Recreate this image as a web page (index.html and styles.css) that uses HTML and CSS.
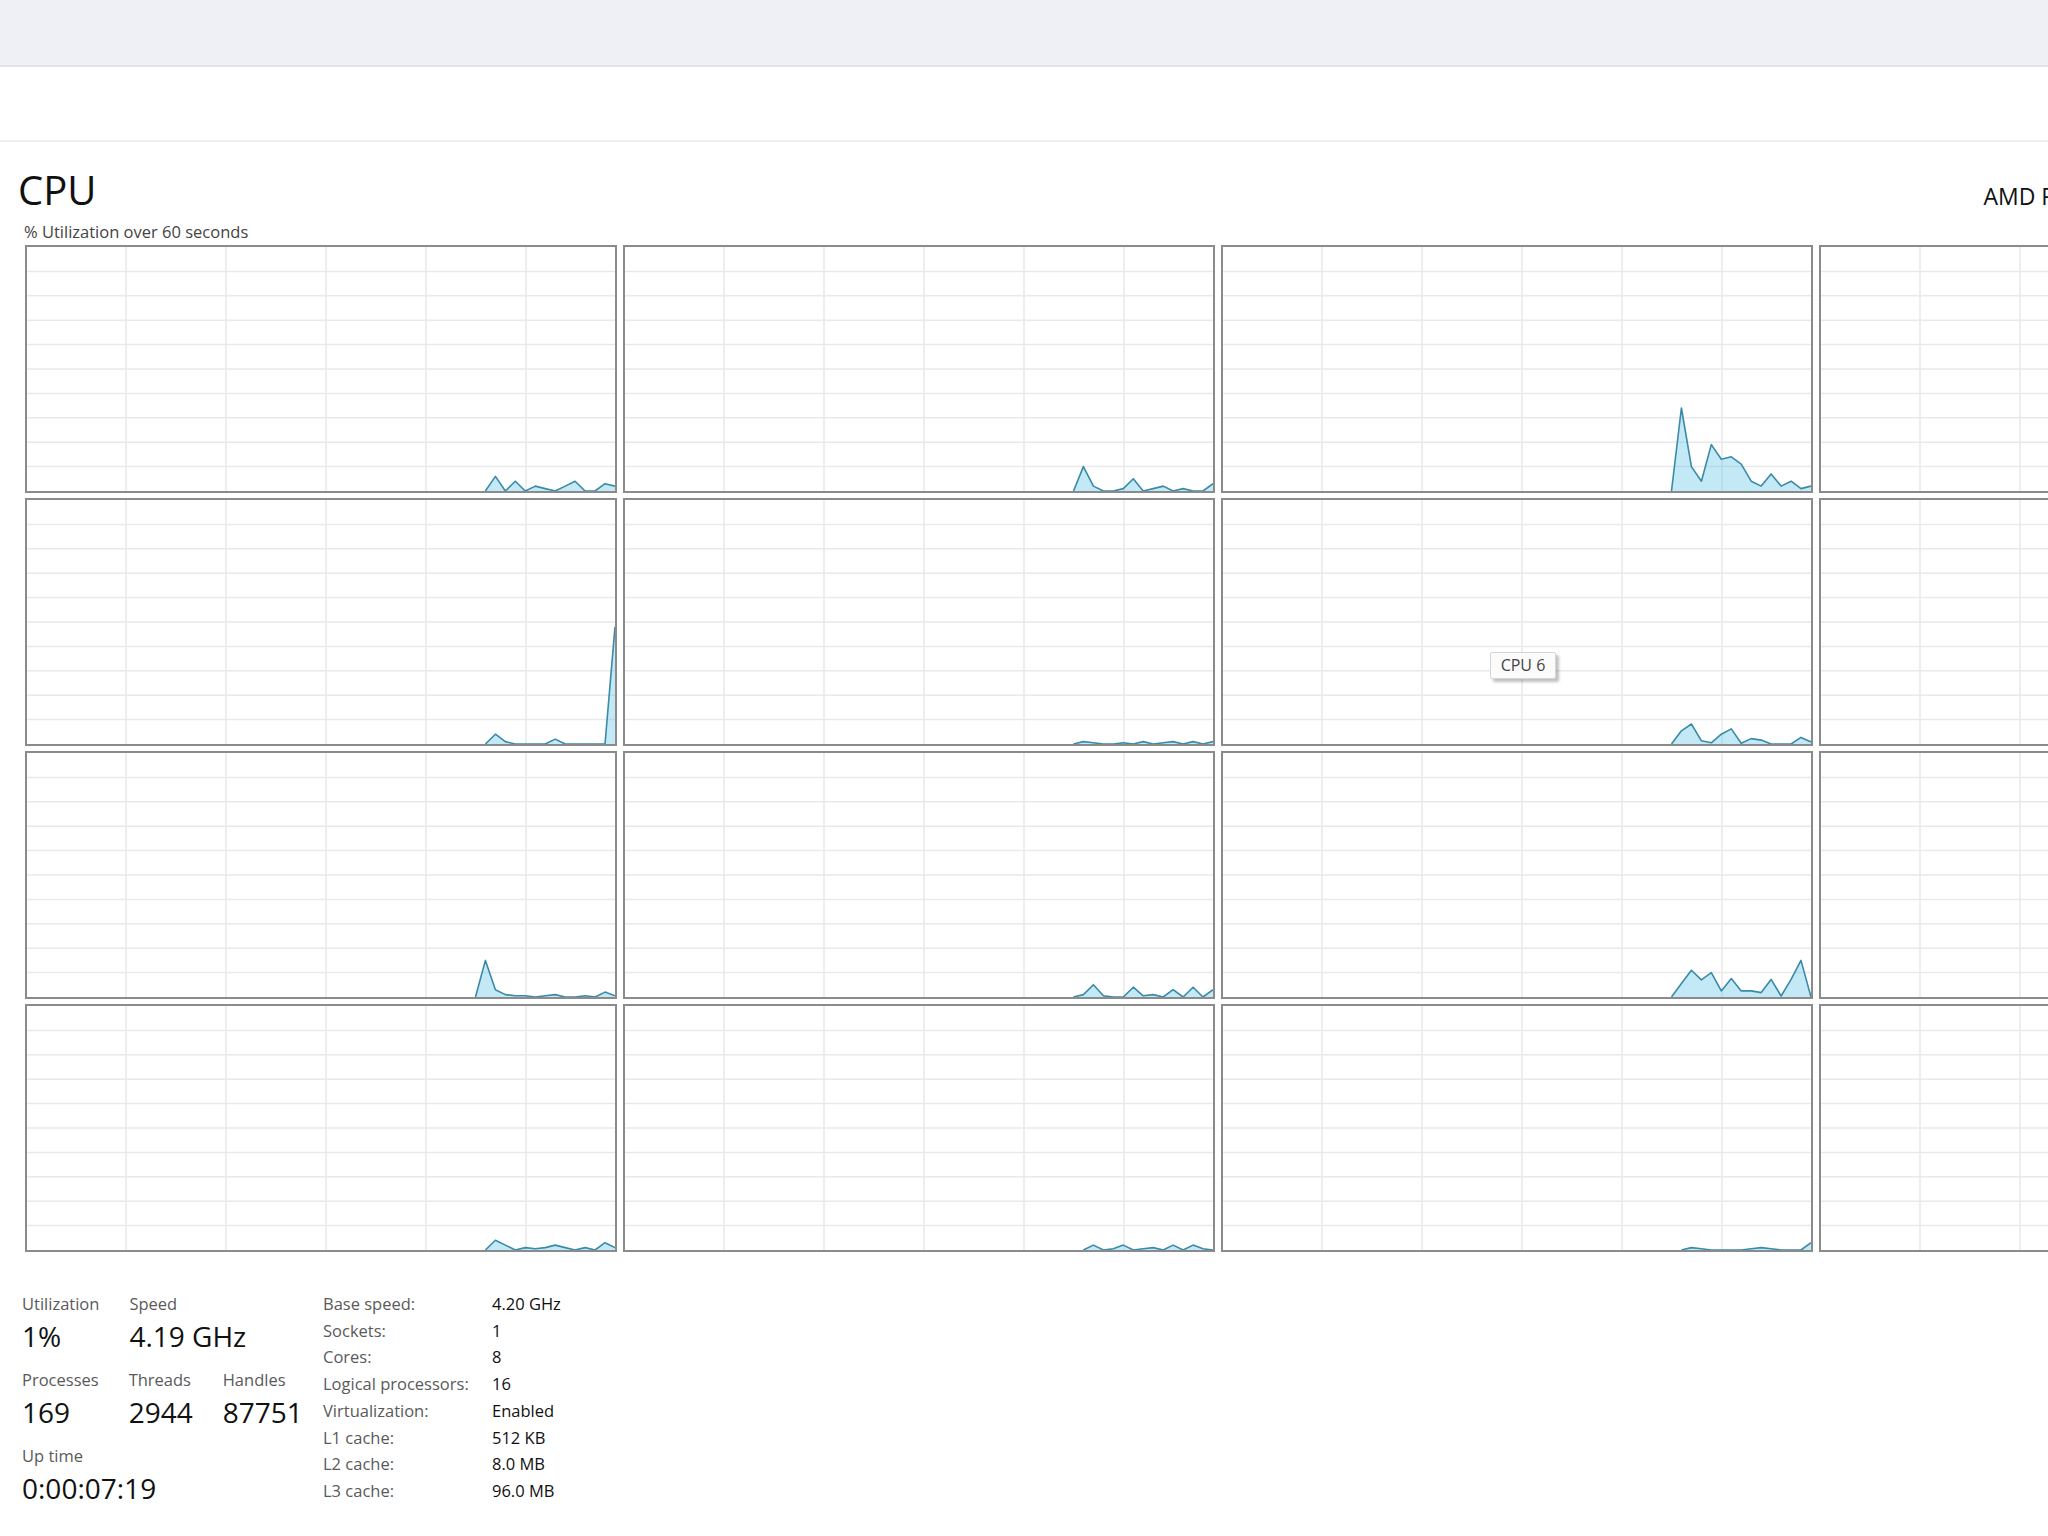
FILE: index.html
```html
<!doctype html>
<html lang="en">
  <head>
    <meta charset="UTF-8" />
    <meta name="viewport" content="width=device-width, initial-scale=1.0" />
    <title>Task Manager - Performance</title>
    <link rel="stylesheet" href="styles.css">
  </head>
  <body>
    <div class="titlebar"></div>
    <div class="toolbar"></div>

    <section class="perf">
      <div class="perf-head">
        <h1 class="perf-title">CPU</h1>
        <div class="perf-model">AMD Ryzen 7 7800X3D 8-Core Processor</div>
      </div>
      <div class="graph-caption">% Utilization over 60 seconds</div>
      <div class="core-grid" id="coreGrid"></div>

      <div class="stats">
        <div class="stats-live">
          <div class="stat-row">
            <div class="stat">
              <div class="stat-label">Utilization</div>
              <div class="stat-value">1%</div>
            </div>
            <div class="stat">
              <div class="stat-label">Speed</div>
              <div class="stat-value">4.19 GHz</div>
            </div>
          </div>
          <div class="stat-row">
            <div class="stat">
              <div class="stat-label">Processes</div>
              <div class="stat-value">169</div>
            </div>
            <div class="stat">
              <div class="stat-label">Threads</div>
              <div class="stat-value">2944</div>
            </div>
            <div class="stat">
              <div class="stat-label">Handles</div>
              <div class="stat-value">87751</div>
            </div>
          </div>
          <div class="stat-row">
            <div class="stat">
              <div class="stat-label">Up time</div>
              <div class="stat-value">0:00:07:19</div>
            </div>
          </div>
        </div>

        <dl class="specs">
          <dt>Base speed:</dt><dd>4.20 GHz</dd>
          <dt>Sockets:</dt><dd>1</dd>
          <dt>Cores:</dt><dd>8</dd>
          <dt>Logical processors:</dt><dd>16</dd>
          <dt>Virtualization:</dt><dd>Enabled</dd>
          <dt>L1 cache:</dt><dd>512 KB</dd>
          <dt>L2 cache:</dt><dd>8.0 MB</dd>
          <dt>L3 cache:</dt><dd>96.0 MB</dd>
        </dl>
      </div>
    </section>

    <div class="tooltip">CPU 6</div>

    <script>
      // last samples of each logical processor, % load, one per second
      const cores = [
        { start: 46, v: [0, 6, 0, 4, 0, 2, 1, 0, 2, 4, 0, 0, 3, 2] },
        { start: 45, v: [0, 10, 2, 0, 0, 1, 5, 0, 1, 2, 0, 1, 0, 0, 3] },
        { start: 45, v: [0, 34, 10, 4, 19, 13, 14, 11, 4, 2, 7, 2, 4, 1, 2] },
        { start: 45, v: [0, 3, 1, 0, 2, 0, 1, 0, 0, 2, 1, 0, 1, 0, 1] },
        { start: 46, v: [0, 4, 1, 0, 0, 0, 0, 2, 0, 0, 0, 0, 0, 48] },
        { start: 45, v: [0, 1, 0.5, 0, 0, 0.5, 0, 1, 0, 0.5, 1, 0, 1, 0, 1] },
        { start: 45, v: [0, 5.4, 8.2, 1.3, 0.5, 4, 6.2, 0.3, 2.2, 1.6, 0, 0, 0, 2.7, 0.8] },
        { start: 46, v: [0, 1, 0, 2, 0, 0, 1, 0, 0, 1, 0, 0, 2, 0] },
        { start: 45, v: [0, 15, 3, 1, 0.5, 0.5, 0, 0.5, 1, 0, 0, 0.5, 0, 2, 0.5] },
        { start: 45, v: [0, 1, 5, 0.5, 0, 0, 4, 0.5, 1, 0, 3, 0, 4, 0, 3] },
        { start: 45, v: [0, 5.5, 11, 7, 10, 2.5, 7.6, 2.5, 2.5, 1.8, 7.2, 0.4, 7.2, 15, 0] },
        { start: 46, v: [0, 2, 0, 1, 0, 0, 3, 0, 1, 0, 0, 1, 0, 2] },
        { start: 46, v: [0, 4, 2, 0, 1, 0.5, 1, 2, 1, 0, 1, 0, 3, 1] },
        { start: 46, v: [0, 2, 0, 0.5, 2, 0, 0.5, 1, 0, 2, 0, 2, 0.5, 0] },
        { start: 46, v: [0, 1, 0.5, 0, 0, 0, 0, 0.5, 1, 0.5, 0, 0, 0, 3] },
        { start: 46, v: [0, 1, 0, 0, 2, 0, 0, 1, 0, 0, 1, 0, 0, 1] },
      ];

      const W = 588;
      const H = 244;
      const STEP = W / 59;

      function graphSvg(core) {
        let grid = '';
        for (let x = 99; x < W; x += 100) {
          grid += `<line x1="${x}" y1="0" x2="${x}" y2="${H}" />`;
        }
        for (let k = 1; k < 10; k++) {
          const y = ((H * k) / 10).toFixed(1);
          grid += `<line x1="0" y1="${y}" x2="${W}" y2="${y}" />`;
        }
        const pts = core.v.map((val, i) => {
          const x = ((core.start + i) * STEP).toFixed(1);
          const y = (H - (val / 100) * H).toFixed(1);
          return `${x},${y}`;
        });
        const first = (core.start * STEP).toFixed(1);
        const last = (59 * STEP).toFixed(1);
        const area = `${first},${H} ${pts.join(' ')} ${last},${H}`;
        return `<svg class="graph" width="${W}" height="${H}" viewBox="0 0 ${W} ${H}">
          <g class="grid-lines">${grid}</g>
          <polygon class="load-fill" points="${area}" />
          <polyline class="load-line" points="${pts.join(' ')}" />
        </svg>`;
      }

      const gridEl = document.getElementById('coreGrid');
      gridEl.innerHTML = cores
        .map((core) => `<div class="core">${graphSvg(core)}</div>`)
        .join('');
    </script>
  </body>
</html>
```

FILE: styles.css
```css
body {
  margin: 0;
  width: 2048px;
  height: 1536px;
  overflow: hidden;
  font-family: "Open Sans", "Noto Sans", sans-serif;
  background: #fff;
  color: #1a1a1a;
  position: relative;
}
.titlebar {
  height: 65px;
  background: #eff0f5;
  border-bottom: 2px solid #e3e4ea;
}
.toolbar {
  height: 73px;
  border-bottom: 2px solid #efefef;
}
.perf {
  width: 2420px;
  padding: 28px 0 0 18px;
  box-sizing: border-box;
}
.perf-head {
  display: flex;
  align-items: baseline;
  padding-right: 5px;
}
.perf-title {
  margin: 0;
  font-size: 40px;
  font-weight: 400;
  line-height: 40px;
  color: #111;
}
.perf-model {
  margin-left: auto;
  font-size: 23px;
  line-height: 1;
  color: #111;
}
.graph-caption {
  margin: 12px 0 0 6px;
  font-size: 16.5px;
  line-height: 20px;
  color: #444;
}
.core-grid {
  margin: 3px 0 0 7px;
  display: grid;
  grid-template-columns: repeat(4, 592px);
  grid-auto-rows: 248px;
  column-gap: 6px;
  row-gap: 5px;
}
.core {
  border: 2px solid #8b8b8b;
  background: #fff;
}
.graph {
  display: block;
}
.grid-lines line {
  stroke: #e9e9e9;
  stroke-width: 1.5;
}
.load-fill {
  fill: rgba(80, 190, 230, 0.34);
  stroke: none;
}
.load-line {
  fill: none;
  stroke: #3a8aa8;
  stroke-width: 1.6;
  stroke-linejoin: round;
}
.stats {
  display: flex;
  align-items: flex-start;
  margin-top: 41px;
  padding-left: 4px;
}
.stats-live {
  width: 301px;
}
.stat-row {
  display: flex;
  gap: 30px;
}
.stat-label {
  font-size: 16.5px;
  line-height: 22px;
  color: #5a5a5a;
}
.stat-value {
  font-size: 28px;
  line-height: 42px;
  margin-bottom: 12px;
  color: #111;
}
.specs {
  margin: -2px 0 0 0;
  display: grid;
  grid-template-columns: 169px auto;
  align-content: start;
  font-size: 16.5px;
  line-height: 26.7px;
}
.specs dt {
  color: #5a5a5a;
}
.specs dd {
  margin: 0;
  color: #111;
}
.tooltip {
  position: absolute;
  left: 1490px;
  top: 652px;
  width: 66px;
  height: 27px;
  box-sizing: border-box;
  border: 1px solid #d6d6d6;
  border-radius: 2px;
  background: #fbfbfb;
  box-shadow: 3px 3px 3px rgba(0, 0, 0, 0.25);
  font-size: 16px;
  line-height: 25px;
  text-align: center;
  color: #444;
}
```
